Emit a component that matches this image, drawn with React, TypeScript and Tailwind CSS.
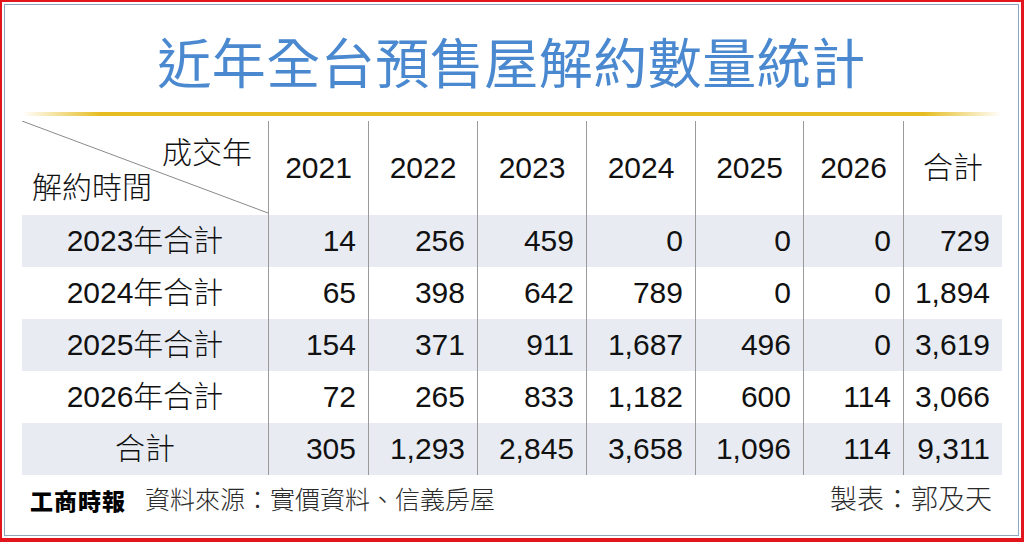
import React from 'react';

const years = ['2021', '2022', '2023', '2024', '2025', '2026'];

const rows: { label: string; values: string[]; striped: boolean }[] = [
  { label: '2023年合計', values: ['14', '256', '459', '0', '0', '0', '729'], striped: true },
  { label: '2024年合計', values: ['65', '398', '642', '789', '0', '0', '1,894'], striped: false },
  { label: '2025年合計', values: ['154', '371', '911', '1,687', '496', '0', '3,619'], striped: true },
  { label: '2026年合計', values: ['72', '265', '833', '1,182', '600', '114', '3,066'], striped: false },
  { label: '合計', values: ['305', '1,293', '2,845', '3,658', '1,096', '114', '9,311'], striped: true },
];

const font = { fontFamily: '"Liberation Sans", "Noto Sans CJK TC", sans-serif' };
const cols = 'grid grid-cols-[246px_100px_109px_109px_109px_108px_100px_99px]';

export default function App() {
  return (
    <div
      className="w-[1024px] h-[542px] bg-white border-t-2 border-l-2 border-r-[3px] border-b-[4px] border-[#e3151c] p-[2px] font-light"
      style={font}
    >
      <div className="h-full w-full border border-[#8fa6bd] flex flex-col">
        {/* Title */}
        <div className="h-[107px] pt-[29px] flex justify-center">
          <h1
            className="text-[54px] leading-none font-normal text-[#4a89cf] tracking-[0.5px]"
            style={{ fontFamily: '"Noto Sans CJK TC", sans-serif' }}
          >
            近年全台預售屋解約數量統計
          </h1>
        </div>

        <div className="ml-[17px] w-[980px] h-[4px] bg-[linear-gradient(to_right,rgba(229,189,34,0),#e5bd22_8%,#e5bd22_92%,rgba(229,189,34,0))]" />

        {/* Table */}
        <div className="ml-[17px] mt-[5px] w-[980px] text-[30px] leading-none text-[#111]">
          <div className={`${cols} h-[94px]`}>
            <div className="relative">
              <svg className="absolute inset-0" width="246" height="94" viewBox="0 0 246 94">
                <line x1="0" y1="0" x2="246" y2="92" stroke="#8a8a8a" strokeWidth="1" />
              </svg>
              <div className="relative flex flex-col h-full">
                <span className="self-end pr-[16px] pt-[17px]">成交年</span>
                <span className="self-start pl-[10px] pt-[5px]">解約時間</span>
              </div>
            </div>
            {years.map((y) => (
              <div key={y} className="border-l border-[#9a9a9a] flex items-center justify-center">
                {y}
              </div>
            ))}
            <div className="border-l border-[#9a9a9a] flex items-center justify-center">合計</div>
          </div>

          {rows.map((r) => (
            <div key={r.label} className={`${cols} h-[52px] ${r.striped ? 'bg-[#e8ecf2]' : 'bg-white'}`}>
              <div className="flex items-center justify-center">{r.label}</div>
              {r.values.map((v, i) => (
                <div key={i} className="border-l border-[#9a9a9a] flex items-center justify-end pr-[12px]">
                  {v}
                </div>
              ))}
            </div>
          ))}
        </div>

        {/* Footer */}
        <div className="ml-[17px] w-[980px] pt-[12px] flex items-center justify-between leading-none text-[#2a2a2a]">
          <div className="flex items-center">
            <span
              className="pl-[8px] w-[123px] text-[23px] font-black text-black tracking-[1px]"
              style={{ fontFamily: '"Noto Sans CJK TC", sans-serif' }}
            >
              工商時報
            </span>
            <span className="text-[25px]">資料來源：實價資料、信義房屋</span>
          </div>
          <span className="pr-[10px] text-[27px]">製表：郭及天</span>
        </div>
      </div>
    </div>
  );
}
